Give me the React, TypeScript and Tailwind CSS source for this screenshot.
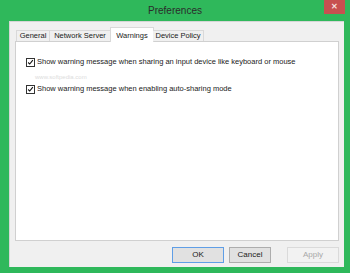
import { useState } from "react";

const TABS = [
  { label: "General", w: "w-[34px]" },
  { label: "Network Server", w: "w-[61px]" },
  { label: "Warnings", w: "w-[44px]" },
  { label: "Device Policy", w: "w-[51px]" },
];

const OPTIONS = [
  "Show warning message when sharing an input device like keyboard or mouse",
  "Show warning message when enabling auto-sharing mode",
];

function Check({ checked, onClick }: { checked: boolean; onClick: () => void }) {
  return (
    <button
      onClick={onClick}
      className="flex h-[9px] w-[9px] shrink-0 items-center justify-center border border-[#333] bg-white"
    >
      {checked && (
        <svg viewBox="0 0 9 9" className="h-[9px] w-[9px]">
          <path d="M1.5 4.5 L3.5 6.5 L7.5 1.5" fill="none" stroke="#111" strokeWidth="1.4" />
        </svg>
      )}
    </button>
  );
}

export default function App() {
  const [active, setActive] = useState(2);
  const [checks, setChecks] = useState([true, true]);

  return (
    <div
      className="flex h-[273px] w-[350px] flex-col bg-[#2fb85b] text-[#1a1a1a]"
      style={{ fontFamily: '"Liberation Sans", Arial, sans-serif' }}
    >
      {/* title bar */}
      <div className="relative flex h-[21px] shrink-0 items-center justify-center">
        <span className="text-[10px] text-[#2b2b2b]">Preferences</span>
        <div className="absolute right-[5px] top-0 flex h-[14px] w-[21px] items-center justify-center bg-[#c75050]">
          <span className="text-[8px] font-bold leading-none text-[#f6dede]">✕</span>
        </div>
      </div>

      {/* client area */}
      <div className="mb-[6px] ml-[9px] mr-[6px] flex flex-1 flex-col border-l border-t border-[#d6d6d6] bg-[#f0f0f0]">
        <div className="ml-[5px] mr-[5px] mt-[4px] flex flex-col">
          {/* tabs */}
          <div className="relative z-10 flex h-[15px] items-end pl-[1px]">
            {TABS.map((t, i) =>
              i === active ? (
                <button
                  key={t.label}
                  onClick={() => setActive(i)}
                  className={`-mx-[1px] -mb-[1px] flex h-[15px] items-start justify-center border border-b-0 border-[#d9d9d9] bg-white pt-[2px] text-[7.5px] ${t.w}`}
                >
                  {t.label}
                </button>
              ) : (
                <button
                  key={t.label}
                  onClick={() => setActive(i)}
                  className={`flex h-[11px] items-center justify-center border border-b-0 border-[#d9d9d9] bg-[#f0f0f0] text-[7.5px] [&:not(:first-child)]:border-l-0 ${t.w}`}
                >
                  {t.label}
                </button>
              )
            )}
          </div>

          {/* panel */}
          <div className="relative h-[200px] border border-[#d0d0d0] bg-white pl-[10px] pt-[15px]">
            <span className="pointer-events-none absolute left-[19px] top-[31px] select-none text-[6px] text-[#dcdcdc]">
              www.softpedia.com
            </span>
            <div className="relative flex flex-col gap-[17px]">
              {OPTIONS.map((o, i) => (
                <label key={o} className="flex items-center gap-[2px] text-[7.5px] leading-[10px]">
                  <Check
                    checked={checks[i]}
                    onClick={() => setChecks((c) => c.map((v, j) => (j === i ? !v : v)))}
                  />
                  <span>{o}</span>
                </label>
              ))}
            </div>
          </div>
        </div>

        {/* buttons */}
        <div className="mr-[5px] mt-[6px] flex justify-end gap-[5px]">
          <button className="h-[16px] w-[52px] border border-[#5f9ee6] bg-[#e1e1e1] text-[8px]">OK</button>
          <button className="h-[16px] w-[42px] border border-[#adadad] bg-[#e1e1e1] text-[8px]">Cancel</button>
          <button className="ml-[11px] h-[16px] w-[52px] border border-[#dadada] bg-[#f2f2f2] text-[8px] text-[#a8a8a8]">
            Apply
          </button>
        </div>
      </div>
    </div>
  );
}
